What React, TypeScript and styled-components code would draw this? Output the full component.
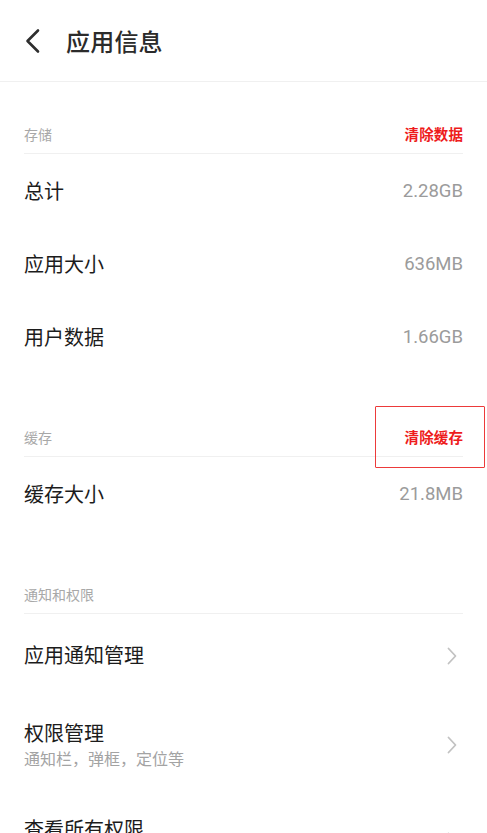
import React from "react";
import styled, { createGlobalStyle } from "styled-components";

const GlobalStyle = createGlobalStyle`
  html, body {
    margin: 0;
    padding: 0;
    background: #ffffff;
  }
  body {
    font-family: Roboto, "Noto Sans CJK SC", "Noto Sans", sans-serif;
    -webkit-font-smoothing: antialiased;
  }
`;

const Page = styled.div`
  width: 487px;
  min-height: 833px;
  background: #ffffff;
  overflow: hidden;
`;

const TopBar = styled.header`
  height: 82px;
  display: flex;
  align-items: center;
  padding: 0 0 0 24px;
  border-bottom: 1px solid #f0f0f0;
  box-sizing: border-box;
`;

const BackButton = styled.button`
  width: 18px;
  height: 26px;
  padding: 0;
  border: none;
  background: none;
  display: flex;
  align-items: center;
  margin-right: 24px;
  margin-top: 1px;
`;

const Title = styled.h1`
  margin: 0;
  font-family: "Noto Sans CJK SC", sans-serif;
  font-size: 24px;
  font-weight: 500;
  color: #2b2b2b;
  letter-spacing: 0.2px;
`;

const Section = styled.section`
  padding: 0 24px;
`;

const SectionHead = styled.div<{ $first?: boolean }>`
  display: flex;
  align-items: center;
  justify-content: space-between;
  padding: ${(p) => (p.$first ? "42px" : "54px")} 0 9px;
  border-bottom: 1px solid #f0f0f0;
  height: 20px;
  box-sizing: content-box;
`;

const SectionLabel = styled.span`
  font-family: "Noto Sans CJK SC", sans-serif;
  font-size: 14px;
  line-height: 20px;
  color: #a8a8a8;
`;

const ActionWrap = styled.span`
  position: relative;
  display: inline-flex;
`;

const ActionButton = styled.button`
  padding: 0;
  border: none;
  background: none;
  font-family: "Noto Sans CJK SC", sans-serif;
  font-size: 14.5px;
  font-weight: 700;
  line-height: 20px;
  color: #ee1c1c;
  letter-spacing: 0.1px;
`;

const Highlight = styled.span`
  position: absolute;
  left: -30px;
  right: -22px;
  top: -21px;
  bottom: -21px;
  border: 1.5px solid #ec3a3a;
  border-radius: 1px;
  pointer-events: none;
`;

const Row = styled.div<{ $tall?: boolean; $spacious?: boolean }>`
  display: flex;
  align-items: center;
  justify-content: space-between;
  height: ${(p) => (p.$tall ? "96px" : p.$spacious ? "82px" : "73px")};
`;

const RowText = styled.div`
  display: flex;
  flex-direction: column;
`;

const RowTitle = styled.span`
  font-family: "Noto Sans CJK SC", sans-serif;
  font-size: 20px;
  line-height: 26px;
  color: #1c1c1c;
`;

const RowSub = styled.span`
  font-family: "Noto Sans CJK SC", sans-serif;
  font-size: 16px;
  line-height: 22px;
  color: #a3a3a3;
  margin-top: 1px;
`;

const RowValue = styled.span`
  font-family: Roboto, sans-serif;
  font-size: 18.5px;
  color: #9b9b9b;
`;

const Chevron = styled.svg`
  width: 12px;
  height: 18px;
  margin-right: 5px;
  margin-top: 2px;
`;

const BackIcon = () => (
  <svg width="18" height="26" viewBox="0 0 18 26" fill="none">
    <path d="M14 2.5 L3.5 13 L14 23.5" stroke="#2e2e2e" strokeWidth="2.6" strokeLinecap="round" strokeLinejoin="round" />
  </svg>
);

const Arrow = () => (
  <Chevron viewBox="0 0 12 18" fill="none">
    <path d="M2.5 1.5 L9.5 9 L2.5 16.5" stroke="#c2c2c2" strokeWidth="1.8" strokeLinecap="round" strokeLinejoin="round" />
  </Chevron>
);

const storage = [
  { name: "总计", value: "2.28GB" },
  { name: "应用大小", value: "636MB" },
  { name: "用户数据", value: "1.66GB" },
];

export default function App() {
  return (
    <Page>
      <GlobalStyle />
      <TopBar>
        <BackButton aria-label="返回">
          <BackIcon />
        </BackButton>
        <Title>应用信息</Title>
      </TopBar>

      <Section>
        <SectionHead $first>
          <SectionLabel>存储</SectionLabel>
          <ActionWrap>
            <ActionButton>清除数据</ActionButton>
          </ActionWrap>
        </SectionHead>
        {storage.map((s) => (
          <Row key={s.name}>
            <RowTitle>{s.name}</RowTitle>
            <RowValue>{s.value}</RowValue>
          </Row>
        ))}
      </Section>

      <Section>
        <SectionHead>
          <SectionLabel>缓存</SectionLabel>
          <ActionWrap>
            <ActionButton>清除缓存</ActionButton>
            <Highlight />
          </ActionWrap>
        </SectionHead>
        <Row>
          <RowTitle>缓存大小</RowTitle>
          <RowValue>21.8MB</RowValue>
        </Row>
      </Section>

      <Section>
        <SectionHead>
          <SectionLabel>通知和权限</SectionLabel>
        </SectionHead>
        <Row $spacious>
          <RowTitle>应用通知管理</RowTitle>
          <Arrow />
        </Row>
        <Row $tall>
          <RowText>
            <RowTitle>权限管理</RowTitle>
            <RowSub>通知栏，弹框，定位等</RowSub>
          </RowText>
          <Arrow />
        </Row>
        <Row $tall>
          <RowText>
            <RowTitle>查看所有权限</RowTitle>
            <RowSub>查看应用已获取的全部权限</RowSub>
          </RowText>
          <Arrow />
        </Row>
      </Section>
    </Page>
  );
}
